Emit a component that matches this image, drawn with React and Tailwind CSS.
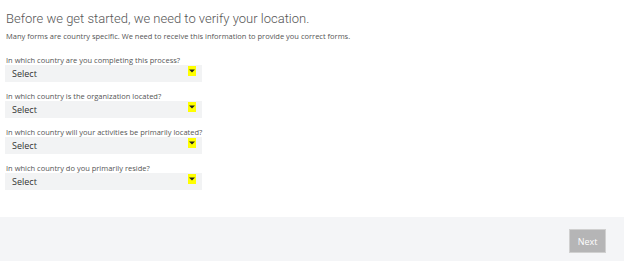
import React from "react";

const questions = [
  "In which country are you completing this process?",
  "In which country is the organization located?",
  "In which country will your activities be primarily located?",
  "In which country do you primarily reside?",
];

function Field({ label, first }) {
  return (
    <div className={first ? "mt-[14px]" : "mt-[9px]"}>
      <div className="h-[10px] leading-[10px] text-[7.5px] text-[#555] pl-[1px] whitespace-nowrap">
        {label}
      </div>
      <div className="relative w-[197px] h-[17px] bg-[#f2f3f4] flex items-center">
        <span className="pl-[7px] text-[9px] leading-[17px] text-[#333]">Select</span>
        <div className="absolute left-[183px] top-[1px] w-[8px] h-[10px] bg-[#ffff00] flex items-center justify-center">
          <svg width="6" height="4" viewBox="0 0 6 4">
            <path d="M0 0.5 H6 L3 3.5 Z" fill="#222" />
          </svg>
        </div>
      </div>
    </div>
  );
}

export default function App() {
  return (
    <div
      className="w-[624px] h-[261px] flex flex-col bg-white"
      style={{ fontFamily: '"Open Sans", "Liberation Sans", sans-serif' }}
    >
      <div className="h-[217px] pl-[5px] pt-[11px]">
        <h1
          className="pl-[1px] text-[13px] leading-[16px] font-light text-[#555] whitespace-nowrap"
          style={{ fontFamily: 'Roboto, "Liberation Sans", sans-serif' }}
        >
          Before we get started, we need to verify your location.
        </h1>
        <p className="mt-[4px] pl-[1px] text-[7.5px] leading-[10px] text-[#555] whitespace-nowrap">
          Many forms are country specific. We need to receive this information to provide you correct forms.
        </p>
        {questions.map((q, i) => (
          <Field key={q} label={q} first={i === 0} />
        ))}
      </div>
      <div className="flex-1 bg-[#f4f5f7] flex justify-end items-start pt-[12px] pr-[18px]">
        <button className="w-[37px] h-[24px] bg-[#b5b5b6] border border-[#d0d0d0] text-white text-[9px] leading-none">
          Next
        </button>
      </div>
    </div>
  );
}
